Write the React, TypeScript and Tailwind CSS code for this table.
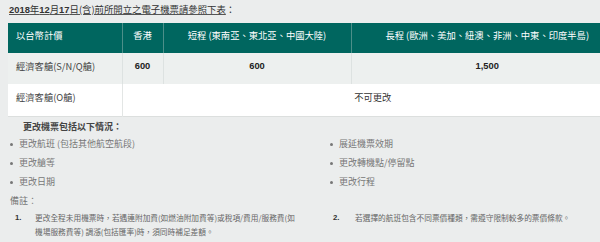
const font = { fontFamily: '"Noto Sans CJK TC", "Liberation Sans", sans-serif' };

const leftItems = ['更改航班 (包括其他航空航段)', '更改艙等', '更改日期'];
const rightItems = ['展延機票效期', '更改轉機點/停留點', '更改行程'];

function Bullet({ text }: { text: string }) {
  return (
    <li className="flex h-[19px] items-center">
      <span className="mr-[6px] h-[3px] w-[3px] rounded-full bg-[#777]" />
      <span>{text}</span>
    </li>
  );
}

export default function App() {
  return (
    <div className="relative h-[242px] w-[600px] overflow-hidden bg-[#ebeded]" style={font}>
      <div className="pl-[9px] pt-[3px] text-[9.4px] leading-[12px] text-[#333]">
        <span className="underline decoration-[#555] underline-offset-[1px]">
          <b className="font-bold" style={{ fontFamily: '"Liberation Sans", sans-serif' }}>2018</b>年
          <b className="font-bold" style={{ fontFamily: '"Liberation Sans", sans-serif' }}>12</b>月
          <b className="font-bold" style={{ fontFamily: '"Liberation Sans", sans-serif' }}>17</b>日(含)前所開立之電子機票請參照下表
        </span>
        ：
      </div>

      <table className="ml-[8px] mt-[7px] w-[615px] table-fixed border-collapse text-[9.3px]">
        <colgroup>
          <col className="w-[114px]" />
          <col className="w-[41px]" />
          <col className="w-[188px]" />
          <col className="w-[272px]" />
        </colgroup>
        <thead>
          <tr className="h-[30px] bg-[#00665f] text-white">
            <th className="border-r border-[#4d8f89] pb-[4px] pl-[8px] text-left font-normal">以台幣計價</th>
            <th className="border-r border-[#4d8f89] pb-[4px] text-center font-normal">香港</th>
            <th className="border-r border-[#4d8f89] pb-[4px] text-center font-normal">短程 (東南亞、東北亞、中國大陸)</th>
            <th className="pb-[4px] text-center font-normal">長程 (歐洲、美加、紐澳、非洲、中東、印度半島)</th>
          </tr>
        </thead>
        <tbody>
          <tr className="h-[31px] bg-[#edf0ef] text-[#444]">
            <td className="border-r border-[#dde2e1] pb-[4px] pl-[8px]">經濟客艙(S/N/Q艙)</td>
            <td className="border-r border-[#dde2e1] pb-[4px] text-center font-bold text-[#222]" style={{ fontFamily: '"Liberation Sans", sans-serif' }}>600</td>
            <td className="border-r border-[#dde2e1] pb-[4px] text-center font-bold text-[#222]" style={{ fontFamily: '"Liberation Sans", sans-serif' }}>600</td>
            <td className="pb-[4px] text-center font-bold text-[#222]" style={{ fontFamily: '"Liberation Sans", sans-serif' }}>1,500</td>
          </tr>
          <tr className="h-[32px] border-b border-[#dcdfde] bg-white text-[#444]">
            <td className="border-r border-[#e3e6e5] pb-[4px] pl-[8px]">經濟客艙(O艙)</td>
            <td colSpan={3} className="pb-[4px] text-center text-[#333]">不可更改</td>
          </tr>
        </tbody>
      </table>

      <div className="mt-[3px] pl-[23px] text-[9px] leading-[14px] font-bold text-[#444]">更改機票包括以下情況：</div>

      <div className="mt-[1px] grid grid-cols-[320px_1fr] text-[9px] text-[#777]">
        <ul className="pl-[10px]">
          {leftItems.map((t) => (
            <Bullet key={t} text={t} />
          ))}
        </ul>
        <ul className="pl-[10px]">
          {rightItems.map((t) => (
            <Bullet key={t} text={t} />
          ))}
        </ul>
      </div>

      <div className="pl-[10px] text-[9px] leading-[18px] text-[#777]">備註：</div>

      <div className="grid grid-cols-[318px_1fr] pt-[1px] text-[7.7px] leading-[14px] text-[#666]">
        <div className="flex">
          <span className="w-[20px] pl-[15px] shrink-0 font-bold text-[#333]" style={{ fontFamily: '"Liberation Sans", sans-serif' }}>1.</span>
          <span className="ml-[15px] w-[262px]">更改全程未用機票時，若遇連附加費(如燃油附加費等)或稅項/費用/服務費(如機場服務費等) 調漲(包括匯率)時，須同時補足差額。</span>
        </div>
        <div className="flex">
          <span className="w-[22px] pl-[15px] shrink-0 font-bold text-[#333]" style={{ fontFamily: '"Liberation Sans", sans-serif' }}>2.</span>
          <span className="ml-[15px]">若選擇的航班包含不同票價種類，需遵守限制較多的票價條款。</span>
        </div>
      </div>
    </div>
  );
}
